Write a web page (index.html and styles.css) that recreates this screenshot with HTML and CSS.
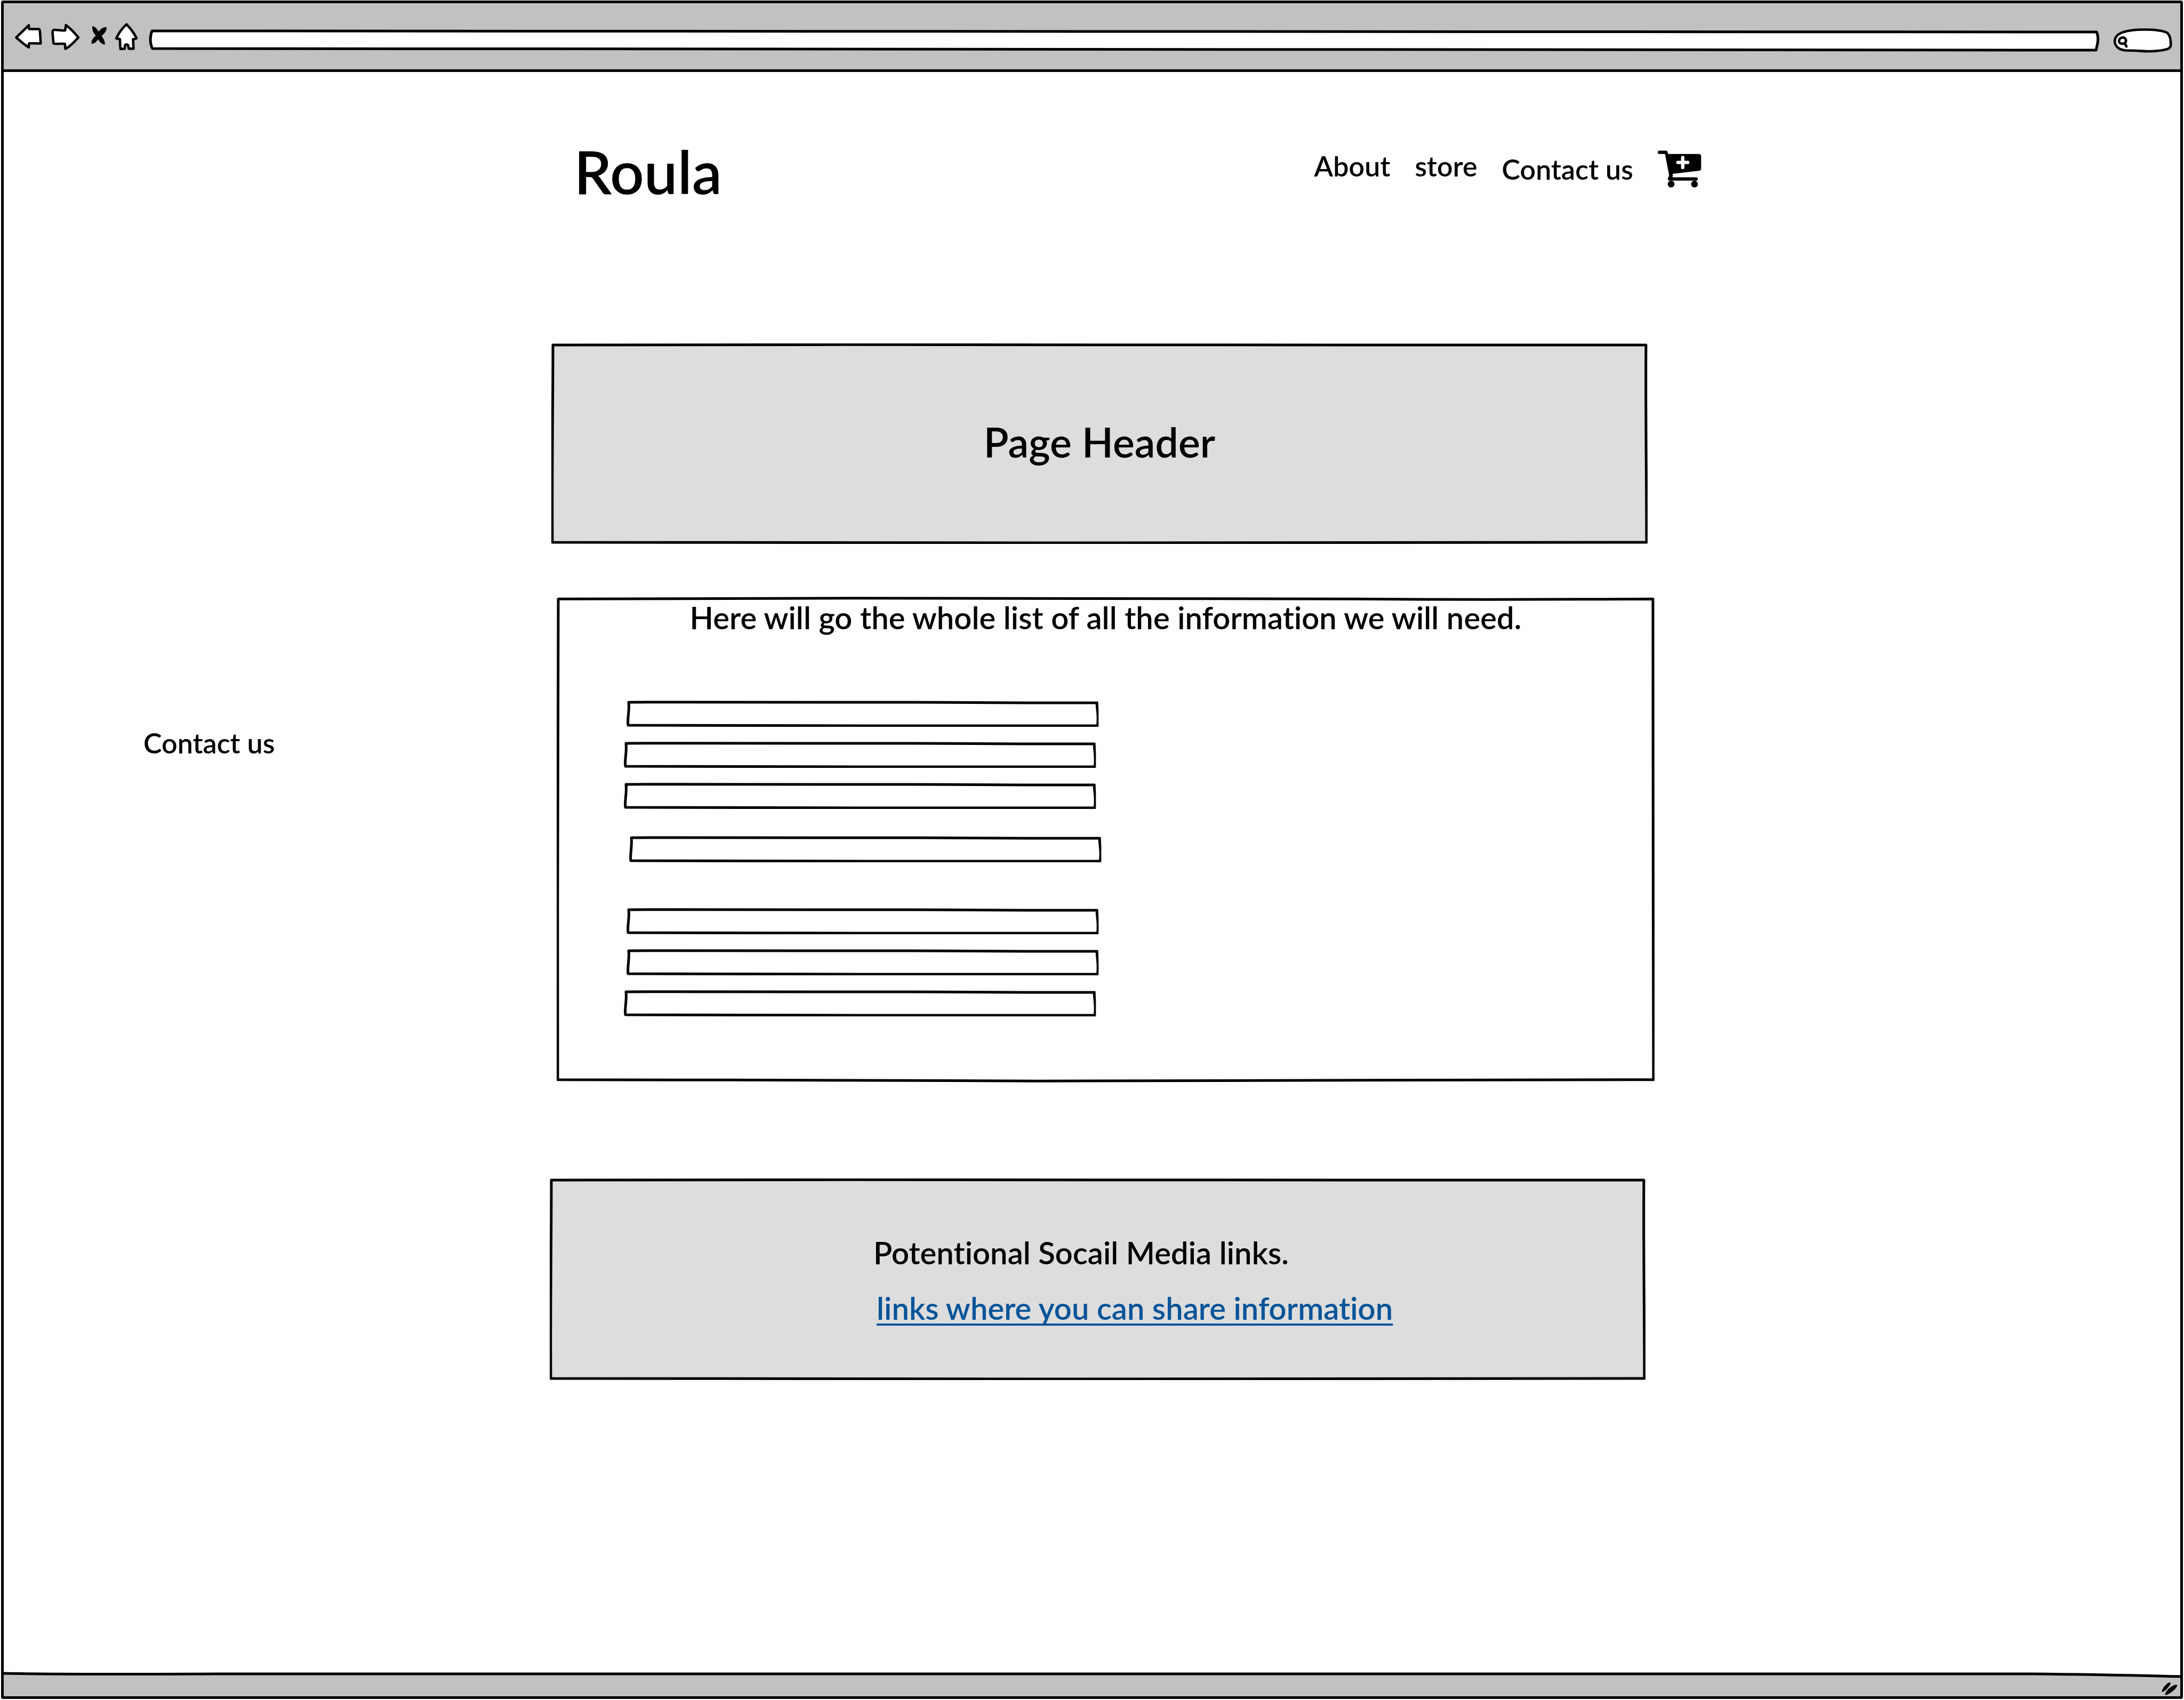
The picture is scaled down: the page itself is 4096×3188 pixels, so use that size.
FILE: index.html
```html
<!DOCTYPE html>
<html lang="en">
<head>
<meta charset="utf-8">
<title>Roula</title>
<link rel="stylesheet" href="styles.css">
</head>
<body>
<svg class="defs" aria-hidden="true">
  <symbol id="box" viewBox="0 0 2056 376" preserveAspectRatio="none">
    <path class="pen" d="M3 3C500 2 1200 2 1500 3S1900 3 2053 3C2052 120 2054 250 2054 373C1500 373 1100 374 900 374S300 373 2 373C1 250 3 120 3 3Z"/>
  </symbol>
  <symbol id="row" viewBox="0 0 885 49" preserveAspectRatio="none">
    <path class="pen" d="M4 3C200 2 400 2 540 3S760 4 882 4C881 14 886 26 883 47C700 46 560 47 440 47S180 46 3 46C1 34 6 20 4 3Z"/>
  </symbol>
</svg>
<div class="browser">
  <div class="toolbar">
    <button class="tool" type="button" aria-label="Back">
      <svg width="53" height="55" viewBox="90 130 175 180"><path class="icon" d="M101 226L179 150L180 173C205 176 222 172 243 174C249 176 247 186 249 198L253 263C225 264 205 260 180 263L179 287C150 270 135 255 101 226Z"/></svg>
    </button>
    <button class="tool" type="button" aria-label="Forward">
      <svg width="60" height="55" viewBox="309 130 197 180"><path class="icon" d="M483 226C460 198 435 170 406 150L402 182C375 186 350 176 330 180C323 183 324 195 325 210L330 263C350 268 375 262 400 265L403 296C432 283 455 255 483 226Z"/></svg>
    </button>
    <button class="tool" type="button" aria-label="Stop">
      <svg width="34" height="55" viewBox="553 130 112 180"><path d="M571 156C586 157 598 172 609 190C622 172 640 160 658 162C660 183 645 202 627 216C638 230 649 250 648 269C630 270 616 254 605 237C594 254 580 266 565 264C562 246 576 226 592 214C577 200 566 176 571 156Z"/></svg>
    </button>
    <button class="tool" type="button" aria-label="Home">
      <svg width="50" height="55" viewBox="711 130 164 180"><path class="icon" d="M781 145C805 170 828 200 842 230C835 238 828 235 821 236L824 295L795 295L790 272C783 267 775 267 771 273L770 295L743 296L740 236C732 233 725 236 718 231C732 200 755 168 781 145Z"/></svg>
    </button>
    <div class="field address">
      <svg class="outline" viewBox="0 0 3657 40" preserveAspectRatio="none" aria-hidden="true"><path class="pen" d="M5 2C1200 1 2400 5 3652 4C3657 14 3654 26 3651 38C2400 36 1200 38 6 35C1 26 1 12 5 2Z"/></svg>
      <input class="entry" type="text" aria-label="Address">
    </div>
    <div class="field search">
      <svg class="outline" viewBox="225 170 360 152" preserveAspectRatio="none" aria-hidden="true"><path class="icon" d="M298 307C255 303 232 280 232 248C234 200 300 178 415 178C480 178 525 184 552 197C570 210 576 240 576 270C576 285 570 293 558 298C500 316 440 315 380 310C350 307 320 309 298 307Z"/><path class="lens" d="M293 263C280 268 262 266 259 255C256 238 266 228 280 227C296 228 304 240 300 253L293 263L304 283"/></svg>
      <input class="entry" type="search" aria-label="Search">
    </div>
  </div>

  <div class="page">
    <header class="masthead">
      <h1 class="brand">Roula</h1>
      <nav class="nav">
        <a class="nav-link" href="#about">About</a>
        <a class="nav-link" href="#store">store</a>
        <a class="nav-link nav-mid" href="#contact">Contact us</a>
        <a class="nav-mid cart" href="#cart" aria-label="Add to cart">
          <svg width="82" height="70" viewBox="50 53 271 230"><path d="M61 54H103Q112 55 114 75H307Q319 76 319 88V165Q319 177 306 179L142 198Q146 208 141 219H288A10 10 0 0 1 288 240H122A11 11 0 0 1 114 223L121 208L95 75H61A10 10 0 0 1 61 54Z"/><circle cx="133" cy="261" r="21"/><circle cx="278" cy="261" r="21"/><path class="plus" d="M205 97V158M175 127H236"/></svg>
        </a>
      </nav>
    </header>

    <div class="body">
      <aside class="side"><a class="nav-link" href="#contact">Contact us</a></aside>
      <main class="content">
        <section class="box banner">
          <svg class="outline shade" aria-hidden="true"><use href="#box"/></svg>
          <h2 class="banner-title">Page Header</h2>
        </section>

        <section class="box panel">
          <svg class="outline" aria-hidden="true"><use href="#box"/></svg>
          <p class="lead">Here will go the whole list of all the information we will need.</p>
          <form class="form">
            <div class="group">
              <div class="row mid"><svg class="outline" aria-hidden="true"><use href="#row"/></svg><input class="entry" type="text" aria-label="Field 1"></div>
              <div class="row"><svg class="outline" aria-hidden="true"><use href="#row"/></svg><input class="entry" type="text" aria-label="Field 2"></div>
              <div class="row"><svg class="outline" aria-hidden="true"><use href="#row"/></svg><input class="entry" type="text" aria-label="Field 3"></div>
            </div>
            <div class="group second">
              <div class="row far"><svg class="outline" aria-hidden="true"><use href="#row"/></svg><input class="entry" type="text" aria-label="Field 4"></div>
            </div>
            <div class="group third">
              <div class="row mid"><svg class="outline" aria-hidden="true"><use href="#row"/></svg><input class="entry" type="text" aria-label="Field 5"></div>
              <div class="row mid"><svg class="outline" aria-hidden="true"><use href="#row"/></svg><input class="entry" type="text" aria-label="Field 6"></div>
              <div class="row"><svg class="outline" aria-hidden="true"><use href="#row"/></svg><input class="entry" type="text" aria-label="Field 7"></div>
            </div>
          </form>
        </section>

        <footer class="box social">
          <svg class="outline shade" aria-hidden="true"><use href="#box"/></svg>
          <p class="social-text">Potentional Socail Media links.</p>
          <p class="social-text"><a class="share" href="#share">links where you can share information</a></p>
        </footer>
      </main>
    </div>
  </div>

  <div class="status">
    <svg class="outline" viewBox="0 0 4082 45" preserveAspectRatio="none" aria-hidden="true"><path d="M0 2C100 4 200 4 400 3H3800C3920 4 4000 6 4082 8V45H0Z"/><path class="pen" d="M0 2C100 4 200 4 400 3H3800C3920 4 4000 6 4082 8C4000 6 3920 4 3800 3H400C200 4 100 4 0 2Z"/></svg>
    <svg class="grip" width="30" height="24" viewBox="446 174 97 78"><path d="M447 231C447 215 470 185 490 175C498 173 503 178 500 184C490 203 470 225 452 232ZM467 249C466 232 500 195 530 189C538 187 543 190 540 197C527 222 495 246 472 251Z"/></svg>
  </div>
</div>
</body>
</html>
```
FILE: styles.css
```css
* {
  box-sizing: border-box;
}

body {
  margin: 0;
  padding: 1px 2px 3px;
  background: #fff;
  color: #000;
  font-family: Lato, "Open Sans", sans-serif;
  font-weight: 600;
  font-variant-ligatures: none;
}

h1,
h2,
p {
  margin: 0;
  font-weight: inherit;
}

a {
  color: inherit;
  text-decoration: none;
}

.defs {
  position: absolute;
  width: 0;
  height: 0;
}

.pen {
  stroke: #000;
  stroke-width: 5px;
  stroke-linejoin: round;
  vector-effect: non-scaling-stroke;
}

.icon {
  fill: #fff;
  stroke: #000;
  stroke-width: 15px;
  stroke-linejoin: round;
}

.outline {
  position: absolute;
  inset: 0;
  width: 100%;
  height: 100%;
  fill: #fff;
  overflow: visible;
}

.shade {
  fill: #ddd;
}

.entry {
  position: relative;
  display: block;
  width: 100%;
  height: 100%;
  padding: 0 12px;
  border: 0;
  outline: 0;
  background: transparent;
  font: inherit;
  font-size: 24px;
  appearance: none;
}

.browser {
  display: flex;
  flex-direction: column;
  min-height: calc(100vh - 3px);
  border: 5px solid #000;
  border-radius: 4px;
}

/* Window toolbar */

.toolbar {
  display: flex;
  align-items: center;
  gap: 14px;
  height: 129px;
  padding: 0 15px 0 20px;
  border-bottom: 5px solid #000;
  background: #c1c1c1;
}

.tool {
  padding: 0;
  border: 0;
  background: none;
}

.tool svg {
  display: block;
  overflow: visible;
}

.field {
  position: relative;
  margin-top: 16px;
}

.address {
  flex: 1;
  height: 40px;
}

.search {
  width: 110px;
  height: 46px;
  margin-left: 13px;
}

.search .entry {
  padding-left: 30px;
}

.lens {
  fill: none;
  stroke: #000;
  stroke-width: 15px;
  stroke-linecap: round;
}

/* Page */

.page {
  flex: 1;
}

.masthead {
  display: flex;
  justify-content: space-between;
  align-items: flex-start;
  height: 509px;
  padding: 122px 22% 0 26.2%;
}

.brand {
  font-size: 112px;
  line-height: 128px;
}

.nav {
  display: flex;
  align-items: flex-start;
  gap: 46px;
  height: 76px;
  margin-top: 22px;
}

.nav-link {
  font-size: 52px;
  line-height: 64px;
}

.nav-mid {
  align-self: center;
}

.cart svg {
  display: block;
}

.plus {
  fill: none;
  stroke: #fff;
  stroke-width: 21px;
  stroke-linecap: round;
}

.body {
  display: grid;
  grid-template-columns: 1024fr 2072fr 986fr;
}

.side {
  padding: 717px 0 0 262px;
}

.content {
  display: flex;
  flex-direction: column;
}

.box {
  position: relative;
}

.banner {
  margin: 0 13px 0 3px;
  padding: 136px 0 144px;
}

.banner-title {
  position: relative;
  font-size: 77px;
  line-height: 96px;
  text-align: center;
}

.panel {
  margin: 96px 0 0 13px;
  padding: 6px 0 126px;
}

.lead {
  position: relative;
  font-size: 58px;
  line-height: 72px;
  text-align: center;
}

.form {
  width: 43%;
  margin: 120px 0 0 126px;
}

.group {
  display: flex;
  flex-direction: column;
  gap: 28px;
}

.second {
  margin-top: 51px;
}

.third {
  margin-top: 86px;
}

.row {
  position: relative;
  height: 49px;
}

.mid {
  left: 5px;
}

.far {
  left: 10px;
}

.social {
  margin: 178px 17px 0 0;
  padding: 87px 0 83px 607px;
}

.social-text {
  position: relative;
  font-size: 58px;
  line-height: 104px;
}

.share {
  margin-left: 6px;
  color: #055499;
  text-decoration: underline 4px;
  text-underline-offset: 7px;
  text-decoration-skip-ink: none;
}

/* Window status bar */

.status {
  position: relative;
  display: flex;
  justify-content: flex-end;
  height: 45px;
  padding: 19px 5px 0 0;
}

.status .outline {
  fill: #c1c1c1;
}

.grip {
  position: relative;
}
```
